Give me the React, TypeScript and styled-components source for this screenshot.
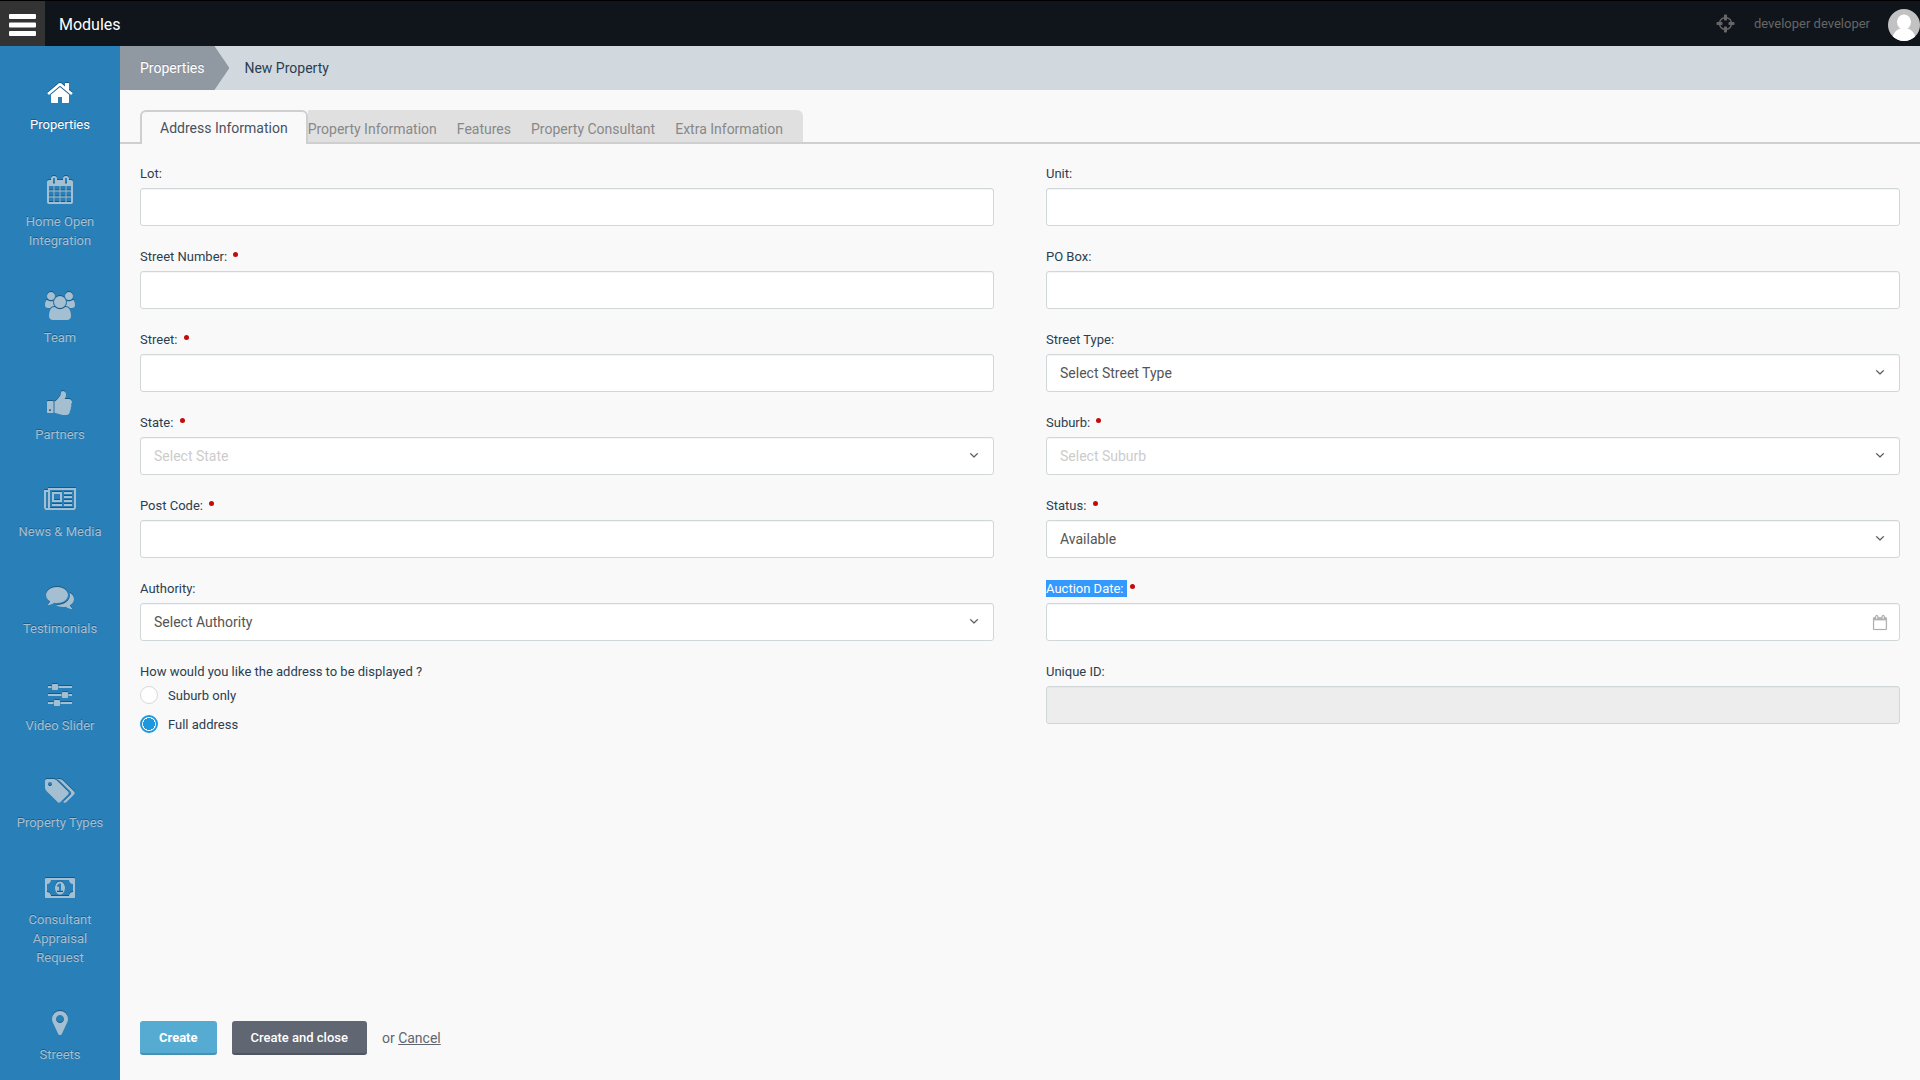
import React from "react";
import styled, { createGlobalStyle, css } from "styled-components";

const GlobalStyle = createGlobalStyle`
  *, *::before, *::after { box-sizing: border-box; }
  body {
    margin: 0;
    background: #f9f9f9;
    color: #2b3e50;
    font-family: Roboto, "Liberation Sans", sans-serif;
    font-size: 13px;
    line-height: 20px;
  }
  button, input, select { font: inherit; margin: 0; }
  a { color: inherit; text-decoration: none; }
`;

const PATHS = {
  home: "M1472 992v480q0 26-19 45t-45 19h-384v-384h-256v384h-384q-26 0-45-19t-19-45v-480q0-1 .5-3t.5-3l575-474 575 474q1 2 1 6zm223-69l-62 74q-8 9-21 11h-3q-13 0-21-7l-692-577-692 577q-12 8-24 7-13-2-21-11l-62-74q-8-10-7-23.5t11-21.5l719-599q32-26 76-26t76 26l244 204v-195q0-14 9-23t23-9h192q14 0 23 9t9 23v408l219 182q10 8 11 21.5t-7 23.5z",
  calendar: "M192 1664h288v-288h-288v288zm352 0h320v-288h-320v288zm-352-352h288v-320h-288v320zm352 0h320v-320h-320v320zm-352-384h288v-288h-288v288zm736 736h320v-288h-320v288zm-384-736h320v-288h-320v288zm768 736h288v-288h-288v288zm-384-352h320v-320h-320v320zm-352-864v-288q0-13-9.5-22.5t-22.5-9.5h-64q-13 0-22.5 9.5t-9.5 22.5v288q0 13 9.5 22.5t22.5 9.5h64q13 0 22.5-9.5t9.5-22.5zm736 864h288v-320h-288v320zm-384-384h320v-288h-320v288zm384 0h288v-288h-288v288zm32-480v-288q0-13-9.5-22.5t-22.5-9.5h-64q-13 0-22.5 9.5t-9.5 22.5v288q0 13 9.5 22.5t22.5 9.5h64q13 0 22.5-9.5t9.5-22.5zm384-64v1280q0 52-38 90t-90 38h-1408q-52 0-90-38t-38-90v-1280q0-52 38-90t90-38h128v-96q0-66 47-113t113-47h64q66 0 113 47t47 113v96h384v-96q0-66 47-113t113-47h64q66 0 113 47t47 113v96h128q52 0 90 38t38 90z",
  users: "M529 896q-162 5-265 128h-134q-82 0-138-40.5t-56-118.5q0-353 124-353 6 0 43.5 21t97.5 42.5 119 21.5q67 0 133-23-5 37-5 66 0 139 81 256zm1071 637q0 120-73 189.5t-194 69.5h-874q-121 0-194-69.5t-73-189.5q0-53 3.5-103.5t14-109 26.5-108.5 43-97.5 62-81 85.5-53.5 111.5-20q10 0 43 21.5t73 48 107 48 135 21.5 135-21.5 107-48 73-48 43-21.5q61 0 111.5 20t85.5 53.5 62 81 43 97.5 26.5 108.5 14 109 3.5 103.5zm-1024-1277q0 106-75 181t-181 75-181-75-75-181 75-181 181-75 181 75 75 181zm704 384q0 159-112.5 271.5t-271.5 112.5-271.5-112.5-112.5-271.5 112.5-271.5 271.5-112.5 271.5 112.5 112.5 271.5zm576 225q0 78-56 118.5t-138 40.5h-134q-103-123-265-128 81-117 81-256 0-29-5-66 66 23 133 23 59 0 119-21.5t97.5-42.5 43.5-21q124 0 124 353zm-128-609q0 106-75 181t-181 75-181-75-75-181 75-181 181-75 181 75 75 181z",
  thumb: "M320 1344q0-26-19-45t-45-19q-27 0-45.5 19t-18.5 45q0 27 18.5 45.5t45.5 18.5q26 0 45-18.5t19-45.5zm160-512v640q0 26-19 45t-45 19h-288q-26 0-45-19t-19-45v-640q0-26 19-45t45-19h288q26 0 45 19t19 45zm1184 0q0 86-55 149 15 44 15 76 3 76-43 137 17 56 0 117-15 57-54 94 9 112-49 181-64 76-197 78h-129q-66 0-144-15.5t-121.5-29-120.5-39.5q-123-43-158-44-26-1-45-19.5t-19-44.5v-641q0-25 18-43.5t43-20.5q24-2 76-59t101-121q68-87 101-120 18-18 31-48t17.5-48.5 13.5-60.5q7-39 12.5-61t19.5-52 34-50q19-19 45-19 46 0 82.5 10.5t60 26 40 40.5 24 45 12 50 5 45 .5 39q0 38-9.5 76t-19 60-27.5 56q-3 6-10 18t-11 22-8 24h277q78 0 135 57t57 135z",
  news: "M1024 512h-384v384h384v-384zm128 640v128h-640v-128h640zm0-768v640h-640v-640h640zm640 768v128h-512v-128h512zm0-256v128h-512v-128h512zm0-256v128h-512v-128h512zm0-256v128h-512v-128h512zm-1536 960v-960h-128v960q0 26 19 45t45 19 45-19 19-45zm1664 0v-1088h-1536v1088q0 33-11 64h1483q26 0 45-19t19-45zm128-1216v1216q0 80-56 136t-136 56h-1664q-80 0-136-56t-56-136v-1088h256v-128h1792z",
  comments: "M1408 768q0 139-94 257t-256.5 186.5-353.5 68.5q-86 0-176-16-124 88-278 128-36 9-86 16h-3q-11 0-20.5-8t-11.5-21q-1-3-1-6.5t.5-6.5 2-6l2.5-5 3.5-5.5 4-5 4.5-5 4-4.5q5-6 23-25t26-29.5 22.5-29 25-38.5 20.5-44q-124-72-195-177t-71-224q0-139 94-257t256.5-186.5 353.5-68.5 353.5 68.5 256.5 186.5 94 257zm384 256q0 120-71 224.5t-195 176.5q10 24 20.5 44t25 38.5 22.5 29 26 29.5 23 25q1 1 4 4.5t4.5 5 4 5 3.5 5.5l2.5 5 2 6 .5 6.5-1 6.5q-3 14-13 22t-22 7q-50-7-86-16-154-40-278-128-90 16-176 16-271 0-472-132 58 4 88 4 161 0 309-45t264-129q125-92 192-212t67-254q0-77-23-152 129 71 204 178t75 230z",
  sliders: "M480 1408v128h-352v-128h352zm352-128q26 0 45 19t19 45v256q0 26-19 45t-45 19h-256q-26 0-45-19t-19-45v-256q0-26 19-45t45-19h256zm160-384v128h-864v-128h864zm-640-512v128h-224v-128h224zm1312 1024v128h-736v-128h736zm-960-1152q26 0 45 19t19 45v256q0 26-19 45t-45 19h-256q-26 0-45-19t-19-45v-256q0-26 19-45t45-19h256zm640 512q26 0 45 19t19 45v256q0 26-19 45t-45 19h-256q-26 0-45-19t-19-45v-256q0-26 19-45t45-19h256zm320 128v128h-224v-128h224zm0-512v128h-864v-128h864z",
  tags: "M384 448q0-53-37.5-90.5t-90.5-37.5-90.5 37.5-37.5 90.5 37.5 90.5 90.5 37.5 90.5-37.5 37.5-90.5zm1067 576q0 53-37 90l-491 492q-39 37-91 37-53 0-90-37l-715-716q-38-37-64.5-101t-26.5-117v-416q0-52 38-90t90-38h416q53 0 117 26.5t102 64.5l715 714q37 39 37 91zm384 0q0 53-37 90l-491 492q-39 37-91 37-36 0-59-14t-53-45l470-470q37-37 37-90 0-52-37-91l-715-714q-38-38-102-64.5t-117-26.5h224q53 0 117 26.5t102 64.5l715 714q37 39 37 91z",
  money: "M768 1152h384v-96h-128v-448h-114l-148 137 77 80q42-37 55-57h2v288h-128v96zm512-256q0 70-21 142t-59.5 134-101.5 101-138 39-138-39-101.5-101-59.5-134-21-142 21-142 59.5-134 101.5-101 138-39 138 39 101.5 101 59.5 134 21 142zm512 256v-512q-106 0-181-75t-75-181h-1152q0 106-75 181t-181 75v512q106 0 181 75t75 181h1152q0-106 75-181t181-75zm128-832v1152q0 26-19 45t-45 19h-1792q-26 0-45-19t-19-45v-1152q0-26 19-45t45-19h1792q26 0 45 19t19 45z",
  marker: "M1152 640q0-106-75-181t-181-75-181 75-75 181 75 181 181 75 181-75 75-181zm256 0q0 109-33 179l-364 774q-16 33-47.5 52t-67.5 19-67.5-19-46.5-52l-365-774q-33-70-33-179 0-212 150-362t362-150 362 150 150 362z",
  calendarBlank: "M192 1664h1408v-1024h-1408v1024zm384-1216v-288q0-14-9-23t-23-9h-64q-14 0-23 9t-9 23v288q0 14 9 23t23 9h64q14 0 23-9t9-23zm768 0v-288q0-14-9-23t-23-9h-64q-14 0-23 9t-9 23v288q0 14 9 23t23 9h64q14 0 23-9t9-23zm384-64v1280q0 52-38 90t-90 38h-1408q-52 0-90-38t-38-90v-1280q0-52 38-90t90-38h128v-96q0-66 47-113t113-47h64q66 0 113 47t47 113v96h384v-96q0-66 47-113t113-47h64q66 0 113 47t47 113v96h128q52 0 90 38t38 90z",
  crosshairs: "M1325 1024h-109q-26 0-45-19t-19-45v-128q0-26 19-45t45-19h109q-32-108-112.5-188.5t-188.5-112.5v109q0 26-19 45t-45 19h-128q-26 0-45-19t-19-45v-109q-108 32-188.5 112.5t-112.5 188.5h109q26 0 45 19t19 45v128q0 26-19 45t-45 19h-109q32 108 112.5 188.5t188.5 112.5v-109q0-26 19-45t45-19h128q26 0 45 19t19 45v109q108-32 188.5-112.5t112.5-188.5zm339-192v128q0 26-19 45t-45 19h-143q-37 161-154.5 278.5t-278.5 154.5v143q0 26-19 45t-45 19h-128q-26 0-45-19t-19-45v-143q-161-37-278.5-154.5t-154.5-278.5h-143q-26 0-45-19t-19-45v-128q0-26 19-45t45-19h143q37-161 154.5-278.5t278.5-154.5v-143q0-26 19-45t45-19h128q26 0 45 19t19 45v143q161 37 278.5 154.5t154.5 278.5h143q26 0 45 19t19 45z",
  angleDown: "M1395 736q0 13-10 23l-466 466q-10 10-23 10t-23-10l-466-466q-10-10-10-23t10-23l50-50q10-10 23-10t23 10l393 393 393-393q10-10 23-10t23 10l50 50q10 10 10 23z",
};

type IconName = keyof typeof PATHS;

const VIEW_BOXES: Partial<Record<IconName, string>> = {
  users: "-64 0 1920 1792",
  tags: "-64 0 1920 1792",
  money: "0 0 1920 1792",
  news: "0 0 2048 1792",
  calendar: "64 0 1664 1792",
  calendarBlank: "64 0 1664 1792",
};

const Glyph = styled.svg<{ $size: number }>`
  display: block;
  flex: none;
  height: ${(p) => p.$size}px;
  width: auto;
  fill: currentColor;
  overflow: visible;
`;

function Icon({ name, size, className }: { name: IconName; size: number; className?: string }) {
  return (
    <Glyph $size={size} className={className} viewBox={VIEW_BOXES[name] ?? "0 0 1792 1792"} aria-hidden="true">
      <path d={PATHS[name]} />
    </Glyph>
  );
}

/* ---------- frame ---------- */

const Page = styled.div`
  display: flex;
  flex-direction: column;
  min-height: 100vh;
`;

const TopBar = styled.header`
  display: flex;
  align-items: center;
  height: 46px;
  border-top: 1px solid #000;
  background: #10151c;
  color: #fff;
`;

const MenuButton = styled.button`
  display: grid;
  place-items: center;
  align-self: stretch;
  width: 45px;
  padding: 3px 0 0;
  border: 0;
  background: #333;
  color: #fff;
  cursor: pointer;
`;

const ModuleTitle = styled.h1`
  flex: 1;
  margin: 0;
  padding-top: 2px;
  padding-left: 14px;
  font-size: 16px;
  font-weight: 400;
`;

const UserArea = styled.div`
  display: flex;
  align-items: center;
  gap: 18px;
  color: #666;
`;

const Avatar = styled.svg`
  display: block;
  margin-top: 3px;
`;

const Body = styled.div`
  display: flex;
  flex: 1;
`;

const Sidebar = styled.nav`
  flex: none;
  width: 120px;
  background: #2980b9;
`;

const SideList = styled.ul`
  margin: 0;
  padding: 0;
  list-style: none;
`;

const SideLink = styled.a<{ $active?: boolean }>`
  display: flex;
  flex-direction: column;
  align-items: center;
  gap: 8px;
  padding: 33px 6px 9px;
  color: ${(p) => (p.$active ? "#fff" : "#a5bfd2")};
  line-height: 19px;
  text-align: center;
  text-shadow: 0 -1px 0 rgba(0, 0, 0, 0.3);

  svg {
    filter: drop-shadow(0 -1px 0 rgba(0, 0, 0, 0.3));
  }
`;

const SideCaption = styled.span`
  white-space: pre-line;
`;

const Main = styled.main`
  display: flex;
  flex: 1;
  flex-direction: column;
  min-width: 0;
`;

const Crumbs = styled.nav`
  display: flex;
  height: 44px;
  background: #d1d9df;
  font-size: 14px;
  line-height: 44px;
`;

const CrumbLink = styled.a`
  padding: 0 25px 0 20px;
  background: #9098a2;
  color: #fff;
  text-shadow: 0 -1px 0 rgba(0, 0, 0, 0.15);
  clip-path: polygon(0 0, calc(100% - 15px) 0, 100% 50%, calc(100% - 15px) 100%, 0 100%);
`;

const CrumbCurrent = styled.span`
  padding-left: 15px;
`;

/* ---------- tabs ---------- */

const TabBar = styled.div`
  display: flex;
  padding: 20px 20px 0;
  border-bottom: 2px solid #cfcfcf;
`;

const Tab = styled.button<{ $active?: boolean }>`
  height: 32px;
  padding: 5px 20px 0 0;
  border: 0;
  background: #e0e0e0;
  color: #888;
  font-size: 14px;
  line-height: 26px;
  cursor: pointer;

  &:last-child {
    border-top-right-radius: 6px;
  }

  ${(p) =>
    p.$active &&
    css`
      height: 34px;
      margin-bottom: -2px;
      padding: 3px 18px;
      border: 2px solid #cfcfcf;
      border-bottom: 0;
      border-radius: 6px 6px 0 0;
      background: #f9f9f9;
      color: #475260;
    `}
`;

/* ---------- form ---------- */

const Form = styled.form`
  display: flex;
  flex: 1;
  flex-direction: column;
  justify-content: space-between;
  gap: 40px;
  padding: 20px 20px 25px;
`;

const Fields = styled.div`
  display: grid;
  grid-template-columns: 1fr 1fr;
  gap: 21px 52px;
`;

const Field = styled.div`
  display: flex;
  flex-direction: column;
  gap: 4px;
  min-width: 0;
`;

const FieldLabel = styled.label`
  display: flex;
  height: 20px;
  white-space: pre;
`;

const LabelText = styled.span<{ $selected?: boolean }>`
  ${(p) =>
    p.$selected &&
    css`
      padding: 1px 0;
      background: #39f;
      color: #fff;
    `}
`;

const RequiredDot = styled.span`
  width: 5px;
  height: 5px;
  margin: 5px 0 0 3px;
  border-radius: 50%;
  background: #c20c0c;
`;

const Control = styled.div`
  position: relative;
`;

const boxStyle = css`
  display: block;
  width: 100%;
  height: 38px;
  padding: 0 13px;
  border: 1px solid #d1d6d9;
  border-radius: 3px;
  background: #fff;
  box-shadow: inset 0 1px 0 rgba(209, 217, 222, 0.25);
  color: #555;
  font-size: 14px;
  outline: none;
`;

const TextBox = styled.input`
  ${boxStyle}

  &:disabled {
    background: #ededed;
  }
`;

const SelectBox = styled.select<{ $empty?: boolean }>`
  ${boxStyle}
  appearance: none;
  color: ${(p) => (p.$empty ? "#ccc" : "#555")};
`;

const Arrow = styled(Icon)`
  position: absolute;
  top: 11px;
  right: 13px;
  color: #555;
  stroke: currentColor;
  stroke-width: 30px;
  pointer-events: none;
`;

const DateMark = styled(Icon)`
  position: absolute;
  top: 12px;
  right: 13px;
  color: #b0b0b0;
  stroke: currentColor;
  stroke-width: 20px;
  pointer-events: none;
`;

const RadioGroup = styled.fieldset`
  min-width: 0;
  margin: 0;
  padding: 0;
  border: 0;
`;

const Legend = styled.legend`
  padding: 0 0 3px;
`;

const RadioLabel = styled.label`
  display: flex;
  align-items: center;
  gap: 10px;
  height: 20px;

  & + & {
    margin-top: 9px;
  }
`;

const RadioText = styled.span`
  padding-top: 2px;
`;

const Radio = styled.input`
  appearance: none;
  width: 18px;
  height: 18px;
  border: 1px solid #d5d9dc;
  border-radius: 50%;
  background: #fff;

  &:checked {
    border: 2px solid #1f97dc;
    background: radial-gradient(circle, #1f97dc 6px, #fff 6px) padding-box;
  }
`;

const Actions = styled.div`
  display: flex;
  align-items: center;
  gap: 15px;
  color: #5f6670;
  font-size: 14px;
`;

const ActionButton = styled.button<{ $primary?: boolean }>`
  height: 34px;
  padding: 2px 19px 0;
  border: 0;
  border-bottom: 2px solid ${(p) => (p.$primary ? "#4690b2" : "#505660")};
  border-radius: 3px;
  background: ${(p) => (p.$primary ? "#55abd2" : "#606672")};
  color: #fff;
  font-size: 13px;
  font-weight: ${(p) => (p.$primary ? 700 : 500)};
  cursor: pointer;
`;

const CancelLink = styled.a`
  text-decoration: underline;
`;

/* ---------- content ---------- */

const MODULES: { icon: IconName; label: string }[] = [
  { icon: "home", label: "Properties" },
  { icon: "calendar", label: "Home Open\nIntegration" },
  { icon: "users", label: "Team" },
  { icon: "thumb", label: "Partners" },
  { icon: "news", label: "News & Media" },
  { icon: "comments", label: "Testimonials" },
  { icon: "sliders", label: "Video Slider" },
  { icon: "tags", label: "Property Types" },
  { icon: "money", label: "Consultant\nAppraisal\nRequest" },
  { icon: "marker", label: "Streets" },
];

const TABS = [
  "Address Information",
  "Property Information",
  "Features",
  "Property Consultant",
  "Extra Information",
];

type FieldSpec = {
  id: string;
  label: string;
  required?: boolean;
  kind?: "select" | "date" | "disabled";
  option?: string;
  empty?: boolean;
  selected?: boolean;
};

const FIELDS: FieldSpec[] = [
  { id: "lot", label: "Lot:" },
  { id: "unit", label: "Unit:" },
  { id: "street-number", label: "Street Number:", required: true },
  { id: "po-box", label: "PO Box:" },
  { id: "street", label: "Street:", required: true },
  { id: "street-type", label: "Street Type:", kind: "select", option: "Select Street Type" },
  { id: "state", label: "State:", required: true, kind: "select", option: "Select State", empty: true },
  { id: "suburb", label: "Suburb:", required: true, kind: "select", option: "Select Suburb", empty: true },
  { id: "post-code", label: "Post Code:", required: true },
  { id: "status", label: "Status:", required: true, kind: "select", option: "Available" },
  { id: "authority", label: "Authority:", kind: "select", option: "Select Authority" },
  { id: "auction-date", label: "Auction Date:", required: true, kind: "date", selected: true },
];

function FormField({ id, label, required, kind, option, empty, selected }: FieldSpec) {
  return (
    <Field>
      <FieldLabel htmlFor={id}>
        <span>
          <LabelText $selected={selected}>{label + " "}</LabelText>
        </span>
        {required && <RequiredDot />}
      </FieldLabel>
      <Control>
        {kind === "select" ? (
          <>
            <SelectBox id={id} $empty={empty}>
              <option>{option}</option>
            </SelectBox>
            <Arrow name="angleDown" size={14} />
          </>
        ) : (
          <TextBox id={id} type="text" disabled={kind === "disabled"} />
        )}
        {kind === "date" && <DateMark name="calendarBlank" size={15} />}
      </Control>
    </Field>
  );
}

export default function App() {
  return (
    <Page>
      <GlobalStyle />
      <TopBar>
        <MenuButton type="button" aria-label="Menu">
          <svg width="27" height="22" viewBox="0 0 27 22" fill="currentColor" aria-hidden="true">
            <rect width="27" height="5" rx="1" />
            <rect y="8.5" width="27" height="5" rx="1" />
            <rect y="17" width="27" height="5" rx="1" />
          </svg>
        </MenuButton>
        <ModuleTitle>Modules</ModuleTitle>
        <UserArea>
          <a href="#" aria-label="View site">
            <Icon name="crosshairs" size={21} />
          </a>
          <a href="#">developer developer</a>
          <Avatar width="32" height="32" viewBox="0 0 32 32" role="img" aria-label="User picture">
            <clipPath id="avatar-clip">
              <circle cx="16" cy="16" r="16" />
            </clipPath>
            <g clipPath="url(#avatar-clip)">
              <rect width="32" height="32" fill="#c2c2c2" />
              <g fill="#fff">
                <ellipse cx="16" cy="13" rx="7" ry="7.500" />
                <ellipse cx="16" cy="30" rx="11.500" ry="11" />
              </g>
            </g>
          </Avatar>
        </UserArea>
      </TopBar>
      <Body>
        <Sidebar aria-label="Modules">
          <SideList>
            {MODULES.map((m, i) => (
              <li key={m.label}>
                <SideLink href="#" $active={i === 0}>
                  <Icon name={m.icon} size={28} />
                  <SideCaption>{m.label}</SideCaption>
                </SideLink>
              </li>
            ))}
          </SideList>
        </Sidebar>
        <Main>
          <Crumbs aria-label="Breadcrumb">
            <CrumbLink href="#">Properties</CrumbLink>
            <CrumbCurrent>New Property</CrumbCurrent>
          </Crumbs>
          <TabBar role="tablist">
            {TABS.map((t, i) => (
              <Tab key={t} type="button" role="tab" aria-selected={i === 0} $active={i === 0}>
                {t}
              </Tab>
            ))}
          </TabBar>
          <Form onSubmit={(e) => e.preventDefault()}>
            <Fields>
              {FIELDS.map((f) => (
                <FormField key={f.id} {...f} />
              ))}
              <RadioGroup>
                <Legend>How would you like the address to be displayed ?</Legend>
                <RadioLabel>
                  <Radio type="radio" name="display" value="suburb" />
                  <RadioText>Suburb only</RadioText>
                </RadioLabel>
                <RadioLabel>
                  <Radio type="radio" name="display" value="full" defaultChecked />
                  <RadioText>Full address</RadioText>
                </RadioLabel>
              </RadioGroup>
              <FormField id="unique-id" label="Unique ID:" kind="disabled" />
            </Fields>
            <Actions>
              <ActionButton type="submit" $primary>
                Create
              </ActionButton>
              <ActionButton type="button">Create and close</ActionButton>
              <span>
                or <CancelLink href="#">Cancel</CancelLink>
              </span>
            </Actions>
          </Form>
        </Main>
      </Body>
    </Page>
  );
}
